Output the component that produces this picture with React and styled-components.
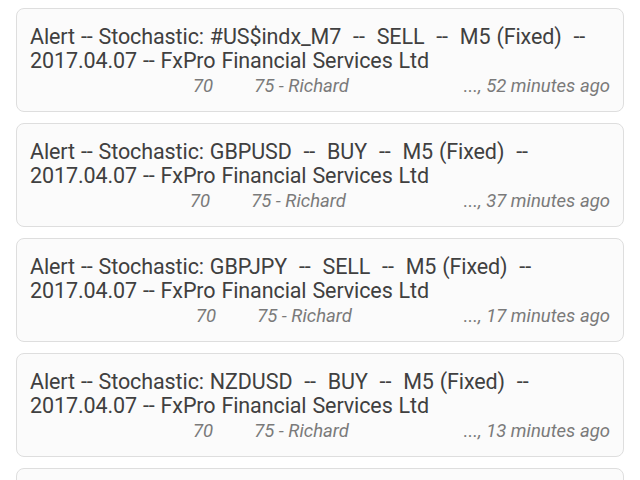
import React from 'react';
import styled, { createGlobalStyle } from 'styled-components';

const Global = createGlobalStyle`
	html, body {
		margin: 0;
		padding: 0;
		background: #ffffff;
		font-family: Roboto, "Noto Sans", sans-serif;
	}
`;

const List = styled.div`
	display: flex;
	flex-direction: column;
	gap: 11px;
	padding: 8px 16px 0 16px;
	height: 480px;
	overflow: hidden;
	box-sizing: border-box;
`;

const Card = styled.div`
	flex-shrink: 0;
	background: #fbfbfb;
	border: 1.5px solid #dedede;
	border-radius: 8px;
	padding: 16px 13px 9px 13px;
	min-height: 77px;
`;

const Title = styled.div`
	font-size: 21.5px;
	line-height: 24px;
	letter-spacing: -0.1px;
	word-spacing: 0.7px;
	color: #404040;
	white-space: pre-wrap;
`;

const Meta = styled.div`
	display: flex;
	justify-content: flex-end;
	font-size: 18.5px;
	line-height: 27px;
	font-style: italic;
	color: #7a7a7a;
`;

const Num = styled.span`
	margin-right: 41px;
`;

const Author = styled.span`
	margin-right: ${p => p.gap}px;
`;

const alerts = [
	{ pair: '#US$indx_M7', side: 'SELL', ago: '52 minutes ago', gap: 115 },
	{ pair: 'GBPUSD', side: 'BUY', ago: '37 minutes ago', gap: 118 },
	{ pair: 'GBPJPY', side: 'SELL', ago: '17 minutes ago', gap: 112 },
	{ pair: 'NZDUSD', side: 'BUY', ago: '13 minutes ago', gap: 115 },
	{ pair: 'EURUSD', side: 'BUY', ago: '9 minutes ago', gap: 115 },
];

const App = () => {
	return (
		<>
			<Global />
			<List>
				{alerts.map((a, i) => (
					<Card key={i}>
						<Title>{`Alert -- Stochastic: ${a.pair}  --  ${a.side}  --  M5 (Fixed)  --\n2017.04.07 -- FxPro Financial Services Ltd`}</Title>
						<Meta>
							<Num>70</Num>
							<Author gap={a.gap}>75 - Richard</Author>
							<span>..., {a.ago}</span>
						</Meta>
					</Card>
				))}
			</List>
		</>
	);
};

export default App;
